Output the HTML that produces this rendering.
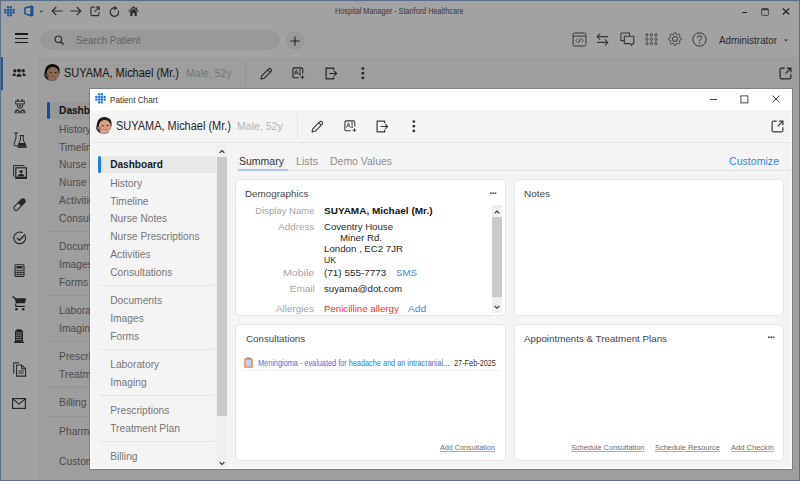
<!DOCTYPE html>
<html><head><meta charset="utf-8"><style>
html,body{margin:0;padding:0;width:800px;height:481px;overflow:hidden;background:#a2a2a2}
body{position:relative;font-family:"Liberation Sans", sans-serif}
.t{position:absolute;white-space:nowrap;font-family:"Liberation Sans", sans-serif}
svg{overflow:visible}
</style></head><body>
<div style="position:absolute;left:0px;top:0px;width:800px;height:481px;background:#f9f9f9"></div><svg style="position:absolute;left:4.2px;top:5.5px;" width="11" height="11" viewBox="0 0 11 11"><rect x="0.9" y="3.4" width="9.2" height="4.2" fill="#2a80e6" opacity="0.22"/><rect x="3.4" y="0.9" width="4.2" height="9.2" fill="#2a80e6" opacity="0.22"/><circle cx="4.05" cy="1.20" r="1.15" fill="#2a80e6"/><circle cx="6.90" cy="1.20" r="1.15" fill="#2a80e6"/><circle cx="1.20" cy="3.95" r="1.15" fill="#2a80e6"/><circle cx="4.05" cy="3.95" r="1.15" fill="#2a80e6"/><circle cx="6.90" cy="3.95" r="1.15" fill="#2a80e6"/><circle cx="9.75" cy="3.95" r="1.15" fill="#2a80e6"/><circle cx="1.20" cy="6.70" r="1.15" fill="#2a80e6"/><circle cx="4.05" cy="6.70" r="1.15" fill="#2a80e6"/><circle cx="6.90" cy="6.70" r="1.15" fill="#2a80e6"/><circle cx="9.75" cy="6.70" r="1.15" fill="#2a80e6"/><circle cx="4.05" cy="9.45" r="1.15" fill="#2a80e6"/><circle cx="6.90" cy="9.45" r="1.15" fill="#2a80e6"/></svg><svg style="position:absolute;left:23px;top:5px;" width="12" height="12" viewBox="0 0 12 12"><path d="M1.2 2.6 L8.2 0.6 L10.4 1.2 V10.8 L8.2 11.4 L1.2 9.2 Z" fill="#2a7ad6"/><path d="M2.7 3.4 L7.4 2.5 V9.5 L2.7 8.5 Z" fill="#f9f9f9"/></svg><svg style="position:absolute;left:38.5px;top:9.5px;" width="5" height="4" viewBox="0 0 5 4"><path d="M0.5 0.8 H4 L2.25 3Z" fill="#666"/></svg><svg style="position:absolute;left:50.5px;top:6px;" width="12" height="10" viewBox="0 0 12 10"><path d="M11.5 5 H1.2 M5.2 1 L1.2 5 L5.2 9" fill="none" stroke="#4a4a4a" stroke-width="1.2"/></svg><svg style="position:absolute;left:69.5px;top:6px;" width="12" height="10" viewBox="0 0 12 10"><path d="M0.5 5 H10.8 M6.8 1 L10.8 5 L6.8 9" fill="none" stroke="#4a4a4a" stroke-width="1.2"/></svg><svg style="position:absolute;left:89.5px;top:6px;" width="10" height="10" viewBox="0 0 10 10"><path d="M4.6 1.1 H2.2 Q0.9 1.1 0.9 2.4 V8.4 Q0.9 9.6 2.2 9.6 H7.6 Q8.9 9.6 8.9 8.4 V6" fill="none" stroke="#4a4a4a" stroke-width="1.1"/><path d="M4.6 5.6 L8.6 1.6 M5.8 1 H9.2 V4.4" fill="none" stroke="#4a4a4a" stroke-width="1.1"/></svg><svg style="position:absolute;left:108.5px;top:5.5px;" width="11" height="11" viewBox="0 0 11 11"><path d="M9.3 4.4 A4.2 4.2 0 1 1 5.8 1.9" fill="none" stroke="#4a4a4a" stroke-width="1.3"/><path d="M5 0 L8.6 2 L5.4 4.4Z" fill="#4a4a4a"/></svg><svg style="position:absolute;left:127.5px;top:5.5px;" width="11" height="11" viewBox="0 0 11 11"><path d="M0.6 5.4 L5.5 0.9 L10.4 5.4" fill="none" stroke="#4a4a4a" stroke-width="1.2"/><path d="M2.2 5.6 L5.5 2.6 L8.8 5.6 V10 H6.6 V7.2 H4.4 V10 H2.2Z" fill="#4a4a4a"/><rect x="7.8" y="1.6" width="1.3" height="2.6" fill="#4a4a4a"/></svg><div class="t" style="left:335.20px;transform-origin:left center;top:5.37px;font-size:8.5px;line-height:12px;color:#5c5c5c;font-weight:normal;;transform:scaleX(0.8576);">Hospital Manager - Stanford Healthcare</div><div style="position:absolute;left:741.5px;top:11.6px;width:5.5px;height:1.1px;background:#3a3a3a"></div><svg style="position:absolute;left:760.5px;top:7.5px;" width="8" height="8" viewBox="0 0 8 8"><rect x="0.6" y="0.6" width="6.8" height="6.8" rx="1" fill="none" stroke="#5a5a5a" stroke-width="0.9"/><rect x="0.6" y="0.6" width="6.8" height="1.6" fill="#5a5a5a"/></svg><svg style="position:absolute;left:781.5px;top:7.5px;" width="8" height="7" viewBox="0 0 8 7"><path d="M0.8 0.5 L7.2 6.5 M7.2 0.5 L0.8 6.5" stroke="#333" stroke-width="1.1"/></svg><div style="position:absolute;left:15px;top:33.2px;width:13px;height:1.6px;background:#262a30"></div><div style="position:absolute;left:15px;top:37.5px;width:13px;height:1.6px;background:#262a30"></div><div style="position:absolute;left:15px;top:41.8px;width:13px;height:1.6px;background:#262a30"></div><div style="position:absolute;left:40px;top:30px;width:240px;height:20px;background:#ececec;border-radius:10px"></div><svg style="position:absolute;left:54px;top:35px;" width="11" height="11" viewBox="0 0 11 11"><circle cx="4.3" cy="4.3" r="3.3" fill="none" stroke="#4a4a4a" stroke-width="1.2"/><path d="M6.8 6.8 L9.6 9.6" stroke="#4a4a4a" stroke-width="1.4"/></svg><div class="t" style="left:75.80px;transform-origin:left center;top:34.85px;font-size:10px;line-height:12px;color:#9a9a9a;font-weight:normal;;transform:scaleX(0.9816);">Search Patient</div><div style="position:absolute;left:285.5px;top:31px;width:19px;height:19px;background:#ececec;border-radius:50%"></div><svg style="position:absolute;left:289.5px;top:36px;" width="10" height="10" viewBox="0 0 10 10"><path d="M5 0.4 V9.6 M0.4 5 H9.6" stroke="#333" stroke-width="1.1"/></svg><svg style="position:absolute;left:571.5px;top:31.5px;" width="15" height="15" viewBox="0 0 15 15"><rect x="1" y="1" width="13" height="13" rx="1.6" fill="none" stroke="#555555" stroke-width="1"/><path d="M1 4.1 H14" stroke="#555555" stroke-width="1"/><path d="M5.4 6.9 L3.8 8.6 L5.4 10.3 M9.6 6.9 L11.2 8.6 L9.6 10.3 M8.2 6.2 L6.8 11" fill="none" stroke="#555555" stroke-width="0.9"/></svg><svg style="position:absolute;left:596px;top:32.5px;" width="13" height="13" viewBox="0 0 13 13"><path d="M1.2 3.6 H12 M4.2 0.6 L1.2 3.6 L4.2 6.6" fill="none" stroke="#555555" stroke-width="1.1"/><path d="M11.8 9.4 H1 M8.8 6.4 L11.8 9.4 L8.8 12.4" fill="none" stroke="#555555" stroke-width="1.1"/></svg><svg style="position:absolute;left:619.5px;top:32px;" width="15" height="15" viewBox="0 0 15 15"><path d="M0.9 0.9 H9.5 V4.2 M0.9 0.9 V8.6 H4.3" fill="none" stroke="#555555" stroke-width="1.05"/><path d="M4.3 4.3 H13.8 V11.6 H12.6 L11.6 13.6 L10.6 11.6 H4.3 Z" fill="none" stroke="#555555" stroke-width="1.05" stroke-linejoin="round"/></svg><svg style="position:absolute;left:644.5px;top:33px;" width="13" height="13" viewBox="0 0 13 13"><ellipse cx="1.90" cy="1.90" rx="1.05" ry="1.35" fill="none" stroke="#555555" stroke-width="0.85"/><ellipse cx="6.40" cy="1.90" rx="1.05" ry="1.35" fill="none" stroke="#555555" stroke-width="0.85"/><ellipse cx="10.90" cy="1.90" rx="1.05" ry="1.35" fill="none" stroke="#555555" stroke-width="0.85"/><ellipse cx="1.90" cy="6.20" rx="1.05" ry="1.35" fill="none" stroke="#555555" stroke-width="0.85"/><ellipse cx="6.40" cy="6.20" rx="1.05" ry="1.35" fill="none" stroke="#555555" stroke-width="0.85"/><ellipse cx="10.90" cy="6.20" rx="1.05" ry="1.35" fill="none" stroke="#555555" stroke-width="0.85"/><ellipse cx="1.90" cy="10.50" rx="1.05" ry="1.35" fill="none" stroke="#555555" stroke-width="0.85"/><ellipse cx="6.40" cy="10.50" rx="1.05" ry="1.35" fill="none" stroke="#555555" stroke-width="0.85"/><ellipse cx="10.90" cy="10.50" rx="1.05" ry="1.35" fill="none" stroke="#555555" stroke-width="0.85"/></svg><svg style="position:absolute;left:668px;top:32px;" width="14" height="14" viewBox="0 0 14 14"><circle cx="7" cy="7" r="2.5" fill="none" stroke="#555555" stroke-width="1"/><path d="M8.81 2.63 L8.93 2.67 L9.04 2.72 L9.17 2.75 L9.30 2.76 L9.47 2.71 L9.71 2.58 L10.02 2.35 L10.35 2.13 L10.62 2.02 L10.83 2.01 L10.99 2.07 L11.14 2.16 L11.27 2.26 L11.40 2.37 L11.52 2.48 L11.63 2.60 L11.74 2.73 L11.84 2.86 L11.93 3.01 L11.99 3.17 L11.98 3.38 L11.87 3.65 L11.65 3.98 L11.42 4.29 L11.29 4.53 L11.24 4.70 L11.25 4.83 L11.28 4.96 L11.33 5.07 L11.37 5.19 L11.42 5.30 L11.47 5.42 L11.54 5.53 L11.63 5.63 L11.78 5.72 L12.04 5.79 L12.42 5.85 L12.81 5.92 L13.08 6.04 L13.23 6.18 L13.31 6.34 L13.35 6.50 L13.37 6.67 L13.38 6.83 L13.39 7.00 L13.38 7.17 L13.37 7.33 L13.35 7.50 L13.31 7.66 L13.23 7.82 L13.08 7.96 L12.81 8.08 L12.42 8.15 L12.04 8.21 L11.78 8.28 L11.63 8.37 L11.54 8.47 L11.47 8.58 L11.42 8.70 L11.37 8.81 L11.33 8.93 L11.28 9.04 L11.25 9.17 L11.24 9.30 L11.29 9.47 L11.42 9.71 L11.65 10.02 L11.87 10.35 L11.98 10.62 L11.99 10.83 L11.93 10.99 L11.84 11.14 L11.74 11.27 L11.63 11.40 L11.52 11.52 L11.40 11.63 L11.27 11.74 L11.14 11.84 L10.99 11.93 L10.83 11.99 L10.62 11.98 L10.35 11.87 L10.02 11.65 L9.71 11.42 L9.47 11.29 L9.30 11.24 L9.17 11.25 L9.04 11.28 L8.93 11.33 L8.81 11.37 L8.70 11.42 L8.58 11.47 L8.47 11.54 L8.37 11.63 L8.28 11.78 L8.21 12.04 L8.15 12.42 L8.08 12.81 L7.96 13.08 L7.82 13.23 L7.66 13.31 L7.50 13.35 L7.33 13.37 L7.17 13.38 L7.00 13.39 L6.83 13.38 L6.67 13.37 L6.50 13.35 L6.34 13.31 L6.18 13.23 L6.04 13.08 L5.92 12.81 L5.85 12.42 L5.79 12.04 L5.72 11.78 L5.63 11.63 L5.53 11.54 L5.42 11.47 L5.30 11.42 L5.19 11.37 L5.07 11.33 L4.96 11.28 L4.83 11.25 L4.70 11.24 L4.53 11.29 L4.29 11.42 L3.98 11.65 L3.65 11.87 L3.38 11.98 L3.17 11.99 L3.01 11.93 L2.86 11.84 L2.73 11.74 L2.60 11.63 L2.48 11.52 L2.37 11.40 L2.26 11.27 L2.16 11.14 L2.07 10.99 L2.01 10.83 L2.02 10.62 L2.13 10.35 L2.35 10.02 L2.58 9.71 L2.71 9.47 L2.76 9.30 L2.75 9.17 L2.72 9.04 L2.67 8.93 L2.63 8.81 L2.58 8.70 L2.53 8.58 L2.46 8.47 L2.37 8.37 L2.22 8.28 L1.96 8.21 L1.58 8.15 L1.19 8.08 L0.92 7.96 L0.77 7.82 L0.69 7.66 L0.65 7.50 L0.63 7.33 L0.62 7.17 L0.61 7.00 L0.62 6.83 L0.63 6.67 L0.65 6.50 L0.69 6.34 L0.77 6.18 L0.92 6.04 L1.19 5.92 L1.58 5.85 L1.96 5.79 L2.22 5.72 L2.37 5.63 L2.46 5.53 L2.53 5.42 L2.58 5.30 L2.63 5.19 L2.67 5.07 L2.72 4.96 L2.75 4.83 L2.76 4.70 L2.71 4.53 L2.58 4.29 L2.35 3.98 L2.13 3.65 L2.02 3.38 L2.01 3.17 L2.07 3.01 L2.16 2.86 L2.26 2.73 L2.37 2.60 L2.48 2.48 L2.60 2.37 L2.73 2.26 L2.86 2.16 L3.01 2.07 L3.17 2.01 L3.38 2.02 L3.65 2.13 L3.98 2.35 L4.29 2.58 L4.53 2.71 L4.70 2.76 L4.83 2.75 L4.96 2.72 L5.07 2.67 L5.19 2.63 L5.30 2.58 L5.42 2.53 L5.53 2.46 L5.63 2.37 L5.72 2.22 L5.79 1.96 L5.85 1.58 L5.92 1.19 L6.04 0.92 L6.18 0.77 L6.34 0.69 L6.50 0.65 L6.67 0.63 L6.83 0.62 L7.00 0.61 L7.17 0.62 L7.33 0.63 L7.50 0.65 L7.66 0.69 L7.82 0.77 L7.96 0.92 L8.08 1.19 L8.15 1.58 L8.21 1.96 L8.28 2.22 L8.37 2.37 L8.47 2.46 L8.58 2.53 L8.70 2.58 L8.81 2.63Z" fill="none" stroke="#555555" stroke-width="0.95" stroke-linejoin="round"/></svg><svg style="position:absolute;left:691.5px;top:31.5px;" width="15" height="15" viewBox="0 0 15 15"><circle cx="7.5" cy="7.5" r="6.7" fill="none" stroke="#555555" stroke-width="1"/><path d="M5.5 5.8 Q5.5 3.7 7.5 3.7 Q9.6 3.7 9.6 5.6 Q9.6 6.9 8.2 7.6 Q7.5 8 7.5 9.2" fill="none" stroke="#555555" stroke-width="1"/><circle cx="7.5" cy="11" r="0.7" fill="#555555"/></svg><div class="t" style="left:719.40px;transform-origin:left center;top:34.95px;font-size:10.3px;line-height:12px;color:#444;font-weight:normal;;transform:scaleX(0.9584);">Administrator</div><svg style="position:absolute;left:783.5px;top:38.5px;" width="4" height="3" viewBox="0 0 4 3"><path d="M0.2 0.5 H3.6 L1.9 2.6Z" fill="#444"/></svg><div style="position:absolute;left:38px;top:55.5px;width:762px;height:1px;background:#fbfbfb"></div><div style="position:absolute;left:0px;top:56px;width:37.5px;height:425px;background:#f8f8f8"></div><div style="position:absolute;left:37.5px;top:56px;width:1px;height:425px;background:#f1f1f1"></div><div style="position:absolute;left:0px;top:57px;width:3.2px;height:32.5px;background:#3a8be6"></div><div style="position:absolute;left:38.5px;top:56.5px;width:762px;height:424px;background:#f3f3f3"></div><svg style="position:absolute;left:43.0px;top:63.2px;" width="18" height="18" viewBox="0 0 18 18"><defs><clipPath id="av1"><circle cx="9" cy="9" r="8.8"/></clipPath></defs>
<g clip-path="url(#av1)"><rect width="18" height="18" fill="#eef2f7"/>
<path d="M1.2 12 Q2 0.5 9.6 1 Q17 1.5 16.6 9.5 L15 14 Z" fill="#1d1816"/>
<ellipse cx="9.8" cy="10.6" rx="6.1" ry="6.9" fill="#d3a085"/>
<path d="M3.6 7.6 Q5.6 3.4 10.4 3.8 Q14.6 4.2 16 8 L16.2 5 Q14.6 1.8 10 1.8 Q4.4 1.9 3.4 6 Z" fill="#1d1816"/>
<path d="M6.6 9.8 H8.8 M11.4 9.6 H13.6" stroke="#3a2218" stroke-width="0.9"/>
<path d="M8 13.4 Q10.3 14.6 12.6 13.2" stroke="#b87a64" stroke-width="0.8" fill="none"/>
<path d="M0 18 V16.5 Q4 15.5 9 17.6 Q13 16.2 18 15.6 V18Z" fill="#3d4a5e"/>
<ellipse cx="3.6" cy="13.4" rx="2.2" ry="2.7" fill="#9c6c56"/>
<path d="M1.8 11.8 L5.8 16.4 L4.6 17.4 L0.8 13Z" fill="#20242c"/>
</g></svg><div class="t" style="left:64.20px;transform-origin:left center;top:67.46px;font-size:12.3px;line-height:12px;color:#262626;font-weight:normal;;transform:scaleX(0.8915);">SUYAMA, Michael (Mr.)</div><div class="t" style="left:185.60px;transform-origin:left center;top:67.40px;font-size:11.6px;line-height:12px;color:#b6b6b6;font-weight:normal;;transform:scaleX(0.9104);">Male, 52y</div><div style="position:absolute;left:245.3px;top:60.5px;width:1px;height:25px;background:#e4e4e4"></div><svg style="position:absolute;left:259.5px;top:66.6px;" width="13" height="13" viewBox="0 0 13 13"><path d="M1 12 L1.7 8.9 L8.9 1.7 Q9.7 1 10.5 1.7 L11.3 2.5 Q12 3.3 11.3 4.1 L4.1 11.3 Z M7.8 2.8 L10.2 5.2" fill="none" stroke="#3a3a3a" stroke-width="1.1" stroke-linejoin="round"/></svg><svg style="position:absolute;left:291.9px;top:67.4px;" width="13" height="13" viewBox="0 0 13 13"><path d="M10.8 6.6 V2.2 Q10.8 0.9 9.5 0.9 H2.2 Q0.9 0.9 0.9 2.2 V9.5 Q0.9 10.8 2.2 10.8 H6.6" fill="none" stroke="#3a3a3a" stroke-width="1.1"/><path d="M2.5 7.6 L4.4 2.8 L6.3 7.6 M3.2 6 H5.6 M7.2 2.8 H9 M8.1 2.8 V7.6 M7.2 7.6 H9" fill="none" stroke="#3a3a3a" stroke-width="0.85"/><path d="M10.4 7.8 L11 9.6 L12.8 10.2 L11 10.8 L10.4 12.6 L9.8 10.8 L8 10.2 L9.8 9.6Z" fill="#3a3a3a"/></svg><svg style="position:absolute;left:324.5px;top:67.0px;" width="13" height="13" viewBox="0 0 13 13"><path d="M8.6 3.3 V1.1 H1.1 V11.9 H8.6 V9.7" fill="none" stroke="#3a3a3a" stroke-width="1.2"/><path d="M4.4 6.5 H11.6 M9.2 4.1 L11.6 6.5 L9.2 8.9" fill="none" stroke="#3a3a3a" stroke-width="1.2"/></svg><svg style="position:absolute;left:360.5px;top:67.3px;" width="4" height="13" viewBox="0 0 4 13"><circle cx="1.85" cy="1.55" r="1.4" fill="#3a3a3a"/><circle cx="1.85" cy="6.15" r="1.4" fill="#3a3a3a"/><circle cx="1.85" cy="10.9" r="1.4" fill="#3a3a3a"/></svg><svg style="position:absolute;left:778.5px;top:67px;" width="13" height="13" viewBox="0 0 13 13"><path d="M5.6 1.1 H2.6 Q1.1 1.1 1.1 2.6 V10.4 Q1.1 11.9 2.6 11.9 H10.4 Q11.9 11.9 11.9 10.4 V7.2" fill="none" stroke="#3a3a3a" stroke-width="1.2"/><path d="M6.6 6.4 L11.2 1.8 M7.8 1.1 H11.9 V5.2" fill="none" stroke="#3a3a3a" stroke-width="1.2"/></svg><div style="position:absolute;left:49.9px;top:101.5px;width:48.5px;height:17.5px;background:#e9e9e9"></div><div style="position:absolute;left:46.9px;top:101.5px;width:3px;height:17.5px;background:#2179e6;border-radius:1.5px"></div><div class="t" style="left:59.10px;transform-origin:left center;top:105.02px;font-size:10.1px;line-height:12px;color:#1d1d1d;font-weight:bold;;">Dashboard</div><div class="t" style="left:59.10px;transform-origin:left center;top:123.76px;font-size:10.25px;line-height:12px;color:#767676;font-weight:normal;;">History</div><div class="t" style="left:59.10px;transform-origin:left center;top:141.66px;font-size:10.25px;line-height:12px;color:#767676;font-weight:normal;;">Timeline</div><div class="t" style="left:59.10px;transform-origin:left center;top:159.46px;font-size:10.25px;line-height:12px;color:#767676;font-weight:normal;;">Nurse Notes</div><div class="t" style="left:59.10px;transform-origin:left center;top:177.26px;font-size:10.25px;line-height:12px;color:#767676;font-weight:normal;;">Nurse Prescriptions</div><div class="t" style="left:59.10px;transform-origin:left center;top:195.06px;font-size:10.25px;line-height:12px;color:#767676;font-weight:normal;;">Activities</div><div class="t" style="left:59.10px;transform-origin:left center;top:212.76px;font-size:10.25px;line-height:12px;color:#767676;font-weight:normal;;">Consultations</div><div style="position:absolute;left:47.9px;top:231px;width:50px;height:1px;background:#e6e6e6"></div><div class="t" style="left:59.10px;transform-origin:left center;top:241.16px;font-size:10.25px;line-height:12px;color:#767676;font-weight:normal;;">Documents</div><div class="t" style="left:59.10px;transform-origin:left center;top:259.16px;font-size:10.25px;line-height:12px;color:#767676;font-weight:normal;;">Images</div><div class="t" style="left:59.10px;transform-origin:left center;top:276.96px;font-size:10.25px;line-height:12px;color:#767676;font-weight:normal;;">Forms</div><div style="position:absolute;left:47.9px;top:295px;width:50px;height:1px;background:#e6e6e6"></div><div class="t" style="left:59.10px;transform-origin:left center;top:305.26px;font-size:10.25px;line-height:12px;color:#767676;font-weight:normal;;">Laboratory</div><div class="t" style="left:59.10px;transform-origin:left center;top:323.06px;font-size:10.25px;line-height:12px;color:#767676;font-weight:normal;;">Imaging</div><div style="position:absolute;left:47.9px;top:341px;width:50px;height:1px;background:#e6e6e6"></div><div class="t" style="left:59.10px;transform-origin:left center;top:351.16px;font-size:10.25px;line-height:12px;color:#767676;font-weight:normal;;">Prescriptions</div><div class="t" style="left:59.10px;transform-origin:left center;top:368.76px;font-size:10.25px;line-height:12px;color:#767676;font-weight:normal;;">Treatment Plan</div><div style="position:absolute;left:47.9px;top:387px;width:50px;height:1px;background:#e6e6e6"></div><div class="t" style="left:59.10px;transform-origin:left center;top:396.86px;font-size:10.25px;line-height:12px;color:#767676;font-weight:normal;;">Billing</div><div style="position:absolute;left:47.9px;top:416px;width:50px;height:1px;background:#e6e6e6"></div><div class="t" style="left:59.10px;transform-origin:left center;top:425.66px;font-size:10.25px;line-height:12px;color:#767676;font-weight:normal;;">Pharmacy</div><div class="t" style="left:59.10px;transform-origin:left center;top:456.46px;font-size:10.25px;line-height:12px;color:#767676;font-weight:normal;;">Customer Orders</div><svg style="position:absolute;left:12px;top:68px;" width="15" height="10" viewBox="0 0 15 10"><circle cx="2.9" cy="2.7" r="1.7" fill="#3a3a3a"/><circle cx="7" cy="2.6" r="1.95" fill="#3a3a3a"/><circle cx="11.2" cy="2.7" r="1.7" fill="#3a3a3a"/><path d="M4.5 8.8 Q4.5 5.8 7 5.8 Q9.5 5.8 9.5 8.8Z" fill="#3a3a3a"/><path d="M0.3 8.1 Q0.5 5.6 2.9 5.3 L3.9 5.9 Q3.3 6.8 3.6 8.1Z" fill="#3a3a3a"/><path d="M13.9 8.1 Q13.7 5.6 11.3 5.3 L10.3 5.9 Q10.9 6.8 10.6 8.1Z" fill="#3a3a3a"/></svg><svg style="position:absolute;left:13.5px;top:98.5px;" width="12" height="15" viewBox="0 0 12 15"><rect x="2.6" y="0.2" width="2.3" height="2" rx="0.6" fill="#5a5a5a"/><rect x="7.1" y="0.2" width="2.3" height="2" rx="0.6" fill="#5a5a5a"/><rect x="1.6" y="2.3" width="8.8" height="2.6" fill="none" stroke="#5a5a5a" stroke-width="1.1"/><path d="M3.3 5.2 Q3.2 9.2 6 9.2 Q8.8 9.2 8.7 5.2" fill="none" stroke="#5a5a5a" stroke-width="1.2"/><circle cx="6" cy="6.6" r="1.2" fill="#5a5a5a"/><path d="M0.5 14.3 Q0.5 10.3 3.6 9.9 L6 12.2 L8.4 9.9 Q11.5 10.3 11.5 14.3Z" fill="#5a5a5a"/><path d="M2.2 13.5 L3.5 11.6 L4.8 13.5Z M7.2 13.5 L8.5 11.6 L9.8 13.5Z" fill="#f3f3f3"/></svg><svg style="position:absolute;left:12.5px;top:131.5px;" width="14" height="16" viewBox="0 0 14 16"><path d="M1.3 1 H5 M3 1 V6 L0.9 12.5 Q0.6 13.6 1.6 13.6 H4" fill="none" stroke="#3a3a3a" stroke-width="1"/><path d="M6.4 3.6 H11.2 M7.4 3.6 V8 L4.6 14.4 Q4.2 15.4 5.3 15.4 H12.7 Q13.8 15.4 13.4 14.4 L10.2 8 V3.6" fill="none" stroke="#3a3a3a" stroke-width="1"/><path d="M6.2 11 H11.8 L13.3 14.8 H4.7Z" fill="#3a3a3a"/></svg><svg style="position:absolute;left:12.5px;top:165px;" width="14" height="14" viewBox="0 0 14 14"><path d="M0.6 11.4 V0.6 H11.4" fill="none" stroke="#3a3a3a" stroke-width="1"/><rect x="2.8" y="2.8" width="10.6" height="10.6" fill="none" stroke="#3a3a3a" stroke-width="1.2"/><circle cx="8.1" cy="6.6" r="1.6" fill="#3a3a3a"/><path d="M5.1 11.2 Q5.1 8.8 8.1 8.8 Q11.1 8.8 11.1 11.2Z" fill="#3a3a3a"/><rect x="2.8" y="11.6" width="10.6" height="1.8" fill="#3a3a3a"/></svg><svg style="position:absolute;left:12.6px;top:198.4px;" width="13" height="13" viewBox="0 0 13 13"><path d="M8.4 1.5 Q10 0 11.6 1.5 Q13.1 3.1 11.6 4.7 L4.7 11.6 Q3.1 13.1 1.5 11.6 Q0 10 1.5 8.4Z" fill="none" stroke="#3a3a3a" stroke-width="1.05"/><path d="M8.4 1.5 Q10 0 11.6 1.5 Q13.1 3.1 11.6 4.7 L8.1 8.1 L4.9 4.9Z" fill="#3a3a3a"/></svg><svg style="position:absolute;left:12.5px;top:231px;" width="14" height="14" viewBox="0 0 14 14"><path d="M12.3 5.2 A5.9 5.9 0 1 1 9.6 1.8" fill="none" stroke="#3a3a3a" stroke-width="1.15"/><path d="M3.9 6.9 L6.3 9.3 L12.4 3.2" fill="none" stroke="#3a3a3a" stroke-width="1.25"/></svg><svg style="position:absolute;left:13.5px;top:264px;" width="11" height="13" viewBox="0 0 11 13"><rect x="1" y="0.7" width="9" height="11.8" rx="0.8" fill="none" stroke="#3a3a3a" stroke-width="1.05"/><rect x="2.4" y="2.1" width="6.2" height="2.4" fill="#3a3a3a"/><path d="M1 6.3 H10 M1 8.5 H10 M1 10.5 H10 M4 6.3 V12.5 M7 6.3 V12.5" stroke="#3a3a3a" stroke-width="0.8"/></svg><svg style="position:absolute;left:11px;top:296px;" width="17" height="15" viewBox="0 0 17 15"><path d="M1.3 1.2 H3.2 L4.6 3.6" fill="none" stroke="#3a3a3a" stroke-width="1.2"/><path d="M3.7 2.2 H15.1 L14 7.3 H4.9Z" fill="#3a3a3a"/><path d="M5.2 7.2 Q4.2 8.6 4.8 10.4 H13.9" fill="none" stroke="#3a3a3a" stroke-width="1.1"/><circle cx="5.4" cy="13.2" r="1.25" fill="#3a3a3a"/><circle cx="12.2" cy="13.2" r="1.25" fill="#3a3a3a"/></svg><svg style="position:absolute;left:14px;top:329px;" width="10" height="14" viewBox="0 0 10 14"><rect x="1" y="1.5" width="8" height="11.5" fill="#3a3a3a"/><rect x="2.3" y="0.3" width="5.4" height="2" fill="#3a3a3a"/><rect x="2.3" y="3.4" width="1.2" height="1.2" fill="#f3f3f3"/><rect x="4.3" y="3.4" width="1.2" height="1.2" fill="#f3f3f3"/><rect x="6.3" y="3.4" width="1.2" height="1.2" fill="#f3f3f3"/><rect x="2.3" y="5.6" width="1.2" height="1.2" fill="#f3f3f3"/><rect x="4.3" y="5.6" width="1.2" height="1.2" fill="#f3f3f3"/><rect x="6.3" y="5.6" width="1.2" height="1.2" fill="#f3f3f3"/><rect x="2.3" y="7.8" width="1.2" height="1.2" fill="#f3f3f3"/><rect x="4.3" y="7.8" width="1.2" height="1.2" fill="#f3f3f3"/><rect x="6.3" y="7.8" width="1.2" height="1.2" fill="#f3f3f3"/><rect x="2.3" y="10.0" width="1.2" height="1.2" fill="#f3f3f3"/><rect x="4.3" y="10.0" width="1.2" height="1.2" fill="#f3f3f3"/><rect x="6.3" y="10.0" width="1.2" height="1.2" fill="#f3f3f3"/><rect x="0" y="12.8" width="10" height="1.2" fill="#3a3a3a"/></svg><svg style="position:absolute;left:12.5px;top:362.3px;" width="14" height="15" viewBox="0 0 14 15"><path d="M0.8 11.4 V0.8 H6.4" fill="none" stroke="#3a3a3a" stroke-width="1.05"/><path d="M3.6 3 H8.6 L12.6 6.9 V14.1 H3.6Z" fill="none" stroke="#3a3a3a" stroke-width="1.05"/><path d="M8.6 3 V6.9 H12.6" fill="none" stroke="#3a3a3a" stroke-width="1"/><path d="M5.3 9 H10.8 M5.3 11.1 H10.8" stroke="#3a3a3a" stroke-width="0.9"/></svg><svg style="position:absolute;left:12px;top:397.5px;" width="14" height="11" viewBox="0 0 14 11"><rect x="0.6" y="0.6" width="12.8" height="9.8" fill="none" stroke="#3a3a3a" stroke-width="1.15"/><path d="M0.8 0.9 L7 6.1 L13.2 0.9" fill="none" stroke="#3a3a3a" stroke-width="1.15"/></svg><div style="position:absolute;left:0px;top:0px;width:800px;height:1px;background:#90acd4"></div><div style="position:absolute;left:0px;top:0px;width:1px;height:481px;background:#90acd4"></div><div style="position:absolute;left:799px;top:0px;width:1px;height:481px;background:#90acd4"></div><div style="position:absolute;left:0px;top:480px;width:800px;height:1px;background:#90acd4"></div><div style="position:absolute;left:0px;top:0px;width:800px;height:481px;background:rgba(0,0,0,0.35)"></div><div style="position:absolute;left:89px;top:88px;width:704px;height:382px;background:rgba(0,0,0,0.18)"></div><div style="position:absolute;left:90px;top:89px;width:702px;height:380px;background:#f4f4f4"></div><div style="position:absolute;left:90px;top:89px;width:702px;height:21px;background:#fff"></div><div style="position:absolute;left:90px;top:110px;width:1px;height:359px;background:#fafafa"></div><div style="position:absolute;left:791px;top:110px;width:1px;height:359px;background:#fafafa"></div><div style="position:absolute;left:90px;top:468px;width:702px;height:1px;background:#fafafa"></div><svg style="position:absolute;left:95.3px;top:93.3px;" width="11" height="11" viewBox="0 0 11 11"><rect x="0.9" y="3.4" width="9.2" height="4.2" fill="#1a6fe0" opacity="0.22"/><rect x="3.4" y="0.9" width="4.2" height="9.2" fill="#1a6fe0" opacity="0.22"/><circle cx="4.05" cy="1.20" r="1.15" fill="#1a6fe0"/><circle cx="6.90" cy="1.20" r="1.15" fill="#1a6fe0"/><circle cx="1.20" cy="3.95" r="1.15" fill="#1a6fe0"/><circle cx="4.05" cy="3.95" r="1.15" fill="#1a6fe0"/><circle cx="6.90" cy="3.95" r="1.15" fill="#1a6fe0"/><circle cx="9.75" cy="3.95" r="1.15" fill="#1a6fe0"/><circle cx="1.20" cy="6.70" r="1.15" fill="#1a6fe0"/><circle cx="4.05" cy="6.70" r="1.15" fill="#1a6fe0"/><circle cx="6.90" cy="6.70" r="1.15" fill="#1a6fe0"/><circle cx="9.75" cy="6.70" r="1.15" fill="#1a6fe0"/><circle cx="4.05" cy="9.45" r="1.15" fill="#1a6fe0"/><circle cx="6.90" cy="9.45" r="1.15" fill="#1a6fe0"/></svg><div class="t" style="left:110.20px;transform-origin:left center;top:93.66px;font-size:8.8px;line-height:12px;color:#333;font-weight:normal;;transform:scaleX(0.9286);">Patient Chart</div><div style="position:absolute;left:710px;top:99px;width:7px;height:1px;background:#444"></div><svg style="position:absolute;left:739.8px;top:95px;" width="9" height="9" viewBox="0 0 9 9"><rect x="0.9" y="0.9" width="7" height="7" fill="none" stroke="#444" stroke-width="0.95"/></svg><svg style="position:absolute;left:772px;top:95px;" width="8" height="8" viewBox="0 0 8 8"><path d="M0.6 0.6 L7.4 7.4 M7.4 0.6 L0.6 7.4" stroke="#333" stroke-width="0.95"/></svg><div style="position:absolute;left:91px;top:142px;width:700px;height:1px;background:#e6e6e6"></div><svg style="position:absolute;left:94.7px;top:116.2px;" width="18" height="18" viewBox="0 0 18 18"><defs><clipPath id="av2"><circle cx="9" cy="9" r="8.8"/></clipPath></defs>
<g clip-path="url(#av2)"><rect width="18" height="18" fill="#eef2f7"/>
<path d="M1.2 12 Q2 0.5 9.6 1 Q17 1.5 16.6 9.5 L15 14 Z" fill="#1d1816"/>
<ellipse cx="9.8" cy="10.6" rx="6.1" ry="6.9" fill="#d3a085"/>
<path d="M3.6 7.6 Q5.6 3.4 10.4 3.8 Q14.6 4.2 16 8 L16.2 5 Q14.6 1.8 10 1.8 Q4.4 1.9 3.4 6 Z" fill="#1d1816"/>
<path d="M6.6 9.8 H8.8 M11.4 9.6 H13.6" stroke="#3a2218" stroke-width="0.9"/>
<path d="M8 13.4 Q10.3 14.6 12.6 13.2" stroke="#b87a64" stroke-width="0.8" fill="none"/>
<path d="M0 18 V16.5 Q4 15.5 9 17.6 Q13 16.2 18 15.6 V18Z" fill="#3d4a5e"/>
<ellipse cx="3.6" cy="13.4" rx="2.2" ry="2.7" fill="#9c6c56"/>
<path d="M1.8 11.8 L5.8 16.4 L4.6 17.4 L0.8 13Z" fill="#20242c"/>
</g></svg><div class="t" style="left:115.90px;transform-origin:left center;top:120.46px;font-size:12.3px;line-height:12px;color:#262626;font-weight:normal;;transform:scaleX(0.8915);">SUYAMA, Michael (Mr.)</div><div class="t" style="left:237.30px;transform-origin:left center;top:120.40px;font-size:11.6px;line-height:12px;color:#b6b6b6;font-weight:normal;;transform:scaleX(0.9104);">Male, 52y</div><div style="position:absolute;left:297px;top:113.5px;width:1px;height:25px;background:#e4e4e4"></div><svg style="position:absolute;left:311.2px;top:119.6px;" width="13" height="13" viewBox="0 0 13 13"><path d="M1 12 L1.7 8.9 L8.9 1.7 Q9.7 1 10.5 1.7 L11.3 2.5 Q12 3.3 11.3 4.1 L4.1 11.3 Z M7.8 2.8 L10.2 5.2" fill="none" stroke="#3a3a3a" stroke-width="1.1" stroke-linejoin="round"/></svg><svg style="position:absolute;left:343.6px;top:120.4px;" width="13" height="13" viewBox="0 0 13 13"><path d="M10.8 6.6 V2.2 Q10.8 0.9 9.5 0.9 H2.2 Q0.9 0.9 0.9 2.2 V9.5 Q0.9 10.8 2.2 10.8 H6.6" fill="none" stroke="#3a3a3a" stroke-width="1.1"/><path d="M2.5 7.6 L4.4 2.8 L6.3 7.6 M3.2 6 H5.6 M7.2 2.8 H9 M8.1 2.8 V7.6 M7.2 7.6 H9" fill="none" stroke="#3a3a3a" stroke-width="0.85"/><path d="M10.4 7.8 L11 9.6 L12.8 10.2 L11 10.8 L10.4 12.6 L9.8 10.8 L8 10.2 L9.8 9.6Z" fill="#3a3a3a"/></svg><svg style="position:absolute;left:376.2px;top:120.0px;" width="13" height="13" viewBox="0 0 13 13"><path d="M8.6 3.3 V1.1 H1.1 V11.9 H8.6 V9.7" fill="none" stroke="#3a3a3a" stroke-width="1.2"/><path d="M4.4 6.5 H11.6 M9.2 4.1 L11.6 6.5 L9.2 8.9" fill="none" stroke="#3a3a3a" stroke-width="1.2"/></svg><svg style="position:absolute;left:412.2px;top:120.3px;" width="4" height="13" viewBox="0 0 4 13"><circle cx="1.85" cy="1.55" r="1.4" fill="#3a3a3a"/><circle cx="1.85" cy="6.15" r="1.4" fill="#3a3a3a"/><circle cx="1.85" cy="10.9" r="1.4" fill="#3a3a3a"/></svg><svg style="position:absolute;left:770.6px;top:120px;" width="13" height="13" viewBox="0 0 13 13"><path d="M5.6 1.1 H2.6 Q1.1 1.1 1.1 2.6 V10.4 Q1.1 11.9 2.6 11.9 H10.4 Q11.9 11.9 11.9 10.4 V7.2" fill="none" stroke="#3a3a3a" stroke-width="1.2"/><path d="M6.6 6.4 L11.2 1.8 M7.8 1.1 H11.9 V5.2" fill="none" stroke="#3a3a3a" stroke-width="1.2"/></svg><div style="position:absolute;left:0;top:0;width:800px;height:468px;overflow:hidden"><div style="position:absolute;left:101px;top:155.5px;width:114.5px;height:17.5px;background:#e9e9e9"></div><div style="position:absolute;left:98px;top:155.5px;width:3px;height:17.5px;background:#2179e6;border-radius:1.5px"></div><div class="t" style="left:110.20px;transform-origin:left center;top:159.02px;font-size:10.1px;line-height:12px;color:#1d1d1d;font-weight:bold;;">Dashboard</div><div class="t" style="left:110.20px;transform-origin:left center;top:177.76px;font-size:10.25px;line-height:12px;color:#767676;font-weight:normal;;">History</div><div class="t" style="left:110.20px;transform-origin:left center;top:195.66px;font-size:10.25px;line-height:12px;color:#767676;font-weight:normal;;">Timeline</div><div class="t" style="left:110.20px;transform-origin:left center;top:213.46px;font-size:10.25px;line-height:12px;color:#767676;font-weight:normal;;">Nurse Notes</div><div class="t" style="left:110.20px;transform-origin:left center;top:231.26px;font-size:10.25px;line-height:12px;color:#767676;font-weight:normal;;">Nurse Prescriptions</div><div class="t" style="left:110.20px;transform-origin:left center;top:249.06px;font-size:10.25px;line-height:12px;color:#767676;font-weight:normal;;">Activities</div><div class="t" style="left:110.20px;transform-origin:left center;top:266.76px;font-size:10.25px;line-height:12px;color:#767676;font-weight:normal;;">Consultations</div><div style="position:absolute;left:99px;top:285px;width:116px;height:1px;background:#e6e6e6"></div><div class="t" style="left:110.20px;transform-origin:left center;top:295.16px;font-size:10.25px;line-height:12px;color:#767676;font-weight:normal;;">Documents</div><div class="t" style="left:110.20px;transform-origin:left center;top:313.16px;font-size:10.25px;line-height:12px;color:#767676;font-weight:normal;;">Images</div><div class="t" style="left:110.20px;transform-origin:left center;top:330.96px;font-size:10.25px;line-height:12px;color:#767676;font-weight:normal;;">Forms</div><div style="position:absolute;left:99px;top:349px;width:116px;height:1px;background:#e6e6e6"></div><div class="t" style="left:110.20px;transform-origin:left center;top:359.26px;font-size:10.25px;line-height:12px;color:#767676;font-weight:normal;;">Laboratory</div><div class="t" style="left:110.20px;transform-origin:left center;top:377.06px;font-size:10.25px;line-height:12px;color:#767676;font-weight:normal;;">Imaging</div><div style="position:absolute;left:99px;top:395px;width:116px;height:1px;background:#e6e6e6"></div><div class="t" style="left:110.20px;transform-origin:left center;top:405.16px;font-size:10.25px;line-height:12px;color:#767676;font-weight:normal;;">Prescriptions</div><div class="t" style="left:110.20px;transform-origin:left center;top:422.76px;font-size:10.25px;line-height:12px;color:#767676;font-weight:normal;;">Treatment Plan</div><div style="position:absolute;left:99px;top:441px;width:116px;height:1px;background:#e6e6e6"></div><div class="t" style="left:110.20px;transform-origin:left center;top:450.86px;font-size:10.25px;line-height:12px;color:#767676;font-weight:normal;;">Billing</div><div style="position:absolute;left:99px;top:470px;width:116px;height:1px;background:#e6e6e6"></div></div><div style="position:absolute;left:215.8px;top:145px;width:11.4px;height:323px;background:#efefef"></div><div style="position:absolute;left:216.5px;top:157px;width:10.3px;height:259px;background:#cacaca"></div><svg style="position:absolute;left:216.5px;top:148px;" width="10" height="7" viewBox="0 0 10 7"><path d="M2.6 4.9 L5 2.5 L7.4 4.9" fill="none" stroke="#333" stroke-width="1.15"/></svg><svg style="position:absolute;left:216.5px;top:460px;" width="10" height="7" viewBox="0 0 10 7"><path d="M2.6 2.1 L5 4.5 L7.4 2.1" fill="none" stroke="#333" stroke-width="1.15"/></svg><div class="t" style="left:238.90px;transform-origin:left center;top:155.37px;font-size:10.8px;line-height:12px;color:#333;font-weight:normal;;transform:scaleX(0.9735);">Summary</div><div class="t" style="left:296.20px;transform-origin:left center;top:155.27px;font-size:10.8px;line-height:12px;color:#8e8e8e;font-weight:normal;;transform:scaleX(0.9945);">Lists</div><div class="t" style="left:330.40px;transform-origin:left center;top:155.27px;font-size:10.8px;line-height:12px;color:#8e8e8e;font-weight:normal;;transform:scaleX(0.9698);">Demo Values</div><div class="t" style="left:729.00px;transform-origin:left center;top:155.37px;font-size:10.8px;line-height:12px;color:#3b84d9;font-weight:normal;;transform:scaleX(0.9817);">Customize</div><div style="position:absolute;left:237px;top:170px;width:555px;height:1px;background:#e4e4e4"></div><div style="position:absolute;left:237.5px;top:169.2px;width:50.3px;height:1.7px;background:#b3c6ec"></div><div style="position:absolute;left:235px;top:179px;width:271px;height:137px;background:#fff;border:1px solid #e6e6e6;border-radius:5px;box-sizing:border-box"></div><div style="position:absolute;left:514px;top:179px;width:270px;height:137px;background:#fff;border:1px solid #e6e6e6;border-radius:5px;box-sizing:border-box"></div><div style="position:absolute;left:235px;top:324px;width:271px;height:137px;background:#fff;border:1px solid #e6e6e6;border-radius:5px;box-sizing:border-box"></div><div style="position:absolute;left:514px;top:324px;width:270px;height:137px;background:#fff;border:1px solid #e6e6e6;border-radius:5px;box-sizing:border-box"></div><div class="t" style="left:245.40px;transform-origin:left center;top:187.82px;font-size:9.8px;line-height:12px;color:#454545;font-weight:normal;;transform:scaleX(1.0049);">Demographics</div><svg style="position:absolute;left:490px;top:191.6px;" width="7" height="3" viewBox="0 0 7 3"><rect x="0" y="0.4" width="1.7" height="1.7" fill="#555"/><rect x="2.3" y="0.4" width="1.7" height="1.7" fill="#555"/><rect x="4.6" y="0.4" width="1.7" height="1.7" fill="#555"/></svg><div style="position:absolute;left:0;top:0;width:800px;height:315px;overflow:hidden"><div class="t" style="right:485.80px;transform-origin:right center;top:205.38px;font-size:9.9px;line-height:12px;color:#a4a4a4;font-weight:normal;;transform:scaleX(0.9629);">Display Name</div><div class="t" style="left:324.40px;transform-origin:left center;top:205.38px;font-size:9.9px;line-height:12px;color:#111;font-weight:bold;;transform:scaleX(1.0122);">SUYAMA, Michael (Mr.)</div><div class="t" style="right:485.80px;transform-origin:right center;top:221.18px;font-size:9.9px;line-height:12px;color:#a4a4a4;font-weight:normal;;transform:scaleX(0.9933);">Address</div><div class="t" style="left:324.40px;transform-origin:left center;top:221.18px;font-size:9.9px;line-height:12px;color:#262626;font-weight:normal;;transform:scaleX(0.9743);">Coventry House</div><div class="t" style="left:340.20px;transform-origin:left center;top:232.28px;font-size:9.9px;line-height:12px;color:#262626;font-weight:normal;;transform:scaleX(0.9808);">Miner Rd.</div><div class="t" style="left:324.40px;transform-origin:left center;top:242.88px;font-size:9.9px;line-height:12px;color:#262626;font-weight:normal;;transform:scaleX(0.9788);">London , EC2 7JR</div><div class="t" style="left:324.40px;transform-origin:left center;top:253.58px;font-size:9.9px;line-height:12px;color:#262626;font-weight:normal;;transform:scaleX(0.8740);">UK</div><div class="t" style="right:485.80px;transform-origin:right center;top:266.88px;font-size:9.9px;line-height:12px;color:#a4a4a4;font-weight:normal;;transform:scaleX(1.0652);">Mobile</div><div class="t" style="left:324.40px;transform-origin:left center;top:266.88px;font-size:9.9px;line-height:12px;color:#262626;font-weight:normal;;transform:scaleX(1.0039);">(71) 555-7773</div><div class="t" style="left:396.30px;transform-origin:left center;top:266.88px;font-size:9.9px;line-height:12px;color:#3f87da;font-weight:normal;;transform:scaleX(0.9806);">SMS</div><div class="t" style="right:485.80px;transform-origin:right center;top:282.88px;font-size:9.9px;line-height:12px;color:#a4a4a4;font-weight:normal;;transform:scaleX(1.0116);">Email</div><div class="t" style="left:324.40px;transform-origin:left center;top:282.88px;font-size:9.9px;line-height:12px;color:#262626;font-weight:normal;;transform:scaleX(0.9781);">suyama@dot.com</div><div class="t" style="right:485.80px;transform-origin:right center;top:303.18px;font-size:9.9px;line-height:12px;color:#a4a4a4;font-weight:normal;;transform:scaleX(1.0030);">Allergies</div><div class="t" style="left:324.40px;transform-origin:left center;top:303.18px;font-size:9.9px;line-height:12px;color:#f0303c;font-weight:normal;;transform:scaleX(0.9802);">Penicilline allergy</div><div class="t" style="left:408.30px;transform-origin:left center;top:303.18px;font-size:9.9px;line-height:12px;color:#3f87da;font-weight:normal;;transform:scaleX(1.0348);">Add</div></div><div style="position:absolute;left:491.7px;top:205.2px;width:10.6px;height:107.6px;background:#efefef"></div><div style="position:absolute;left:491.7px;top:217px;width:10.6px;height:80.3px;background:#c9c9c9"></div><svg style="position:absolute;left:492px;top:207.5px;" width="10" height="8" viewBox="0 0 10 8"><path d="M2.7 5.3 L5 3 L7.3 5.3" fill="none" stroke="#333" stroke-width="1.1"/></svg><svg style="position:absolute;left:492px;top:303px;" width="10" height="8" viewBox="0 0 10 8"><path d="M2.7 3 L5 5.3 L7.3 3" fill="none" stroke="#333" stroke-width="1.1"/></svg><div class="t" style="left:523.60px;transform-origin:left center;top:187.82px;font-size:9.8px;line-height:12px;color:#454545;font-weight:normal;;transform:scaleX(1.0151);">Notes</div><div class="t" style="left:245.80px;transform-origin:left center;top:332.82px;font-size:9.8px;line-height:12px;color:#454545;font-weight:normal;;transform:scaleX(0.9967);">Consultations</div><svg style="position:absolute;left:244px;top:356.5px;" width="9" height="11" viewBox="0 0 9 11"><rect x="0.3" y="1.2" width="8.4" height="9.6" rx="0.9" fill="#e9852a"/><rect x="1.6" y="2.6" width="5.8" height="7" fill="#c6cdf0"/><rect x="2.6" y="0.3" width="3.8" height="2" rx="0.5" fill="#9a9a9a"/></svg><div class="t" style="left:257.80px;transform-origin:left center;top:356.64px;font-size:8.3px;line-height:12px;color:#2e7bd7;font-weight:normal;;transform:scaleX(0.8821);">Meningioma - evaluated for headache and an intracranial...</div><div class="t" style="left:453.60px;transform-origin:left center;top:356.64px;font-size:8.3px;line-height:12px;color:#333;font-weight:normal;;transform:scaleX(0.8824);">27-Feb-2025</div><div style="position:absolute;left:241.7px;top:370px;width:258px;height:1px;background:#efefef"></div><div class="t" style="left:439.80px;transform-origin:left center;top:441.84px;font-size:7.7px;line-height:12px;color:#6a6a6a;font-weight:normal;text-decoration:underline;text-decoration-color:#b0b0b0;text-underline-offset:1px;transform:scaleX(0.9387);">Add Consultation</div><div class="t" style="left:524.00px;transform-origin:left center;top:333.02px;font-size:9.8px;line-height:12px;color:#454545;font-weight:normal;;transform:scaleX(0.9983);">Appointments &amp; Treatment Plans</div><svg style="position:absolute;left:768px;top:336.4px;" width="7" height="3" viewBox="0 0 7 3"><rect x="0" y="0.4" width="1.7" height="1.7" fill="#555"/><rect x="2.3" y="0.4" width="1.7" height="1.7" fill="#555"/><rect x="4.6" y="0.4" width="1.7" height="1.7" fill="#555"/></svg><div class="t" style="left:571.40px;transform-origin:left center;top:441.84px;font-size:7.7px;line-height:12px;color:#6a6a6a;font-weight:normal;text-decoration:underline;text-decoration-color:#b0b0b0;text-underline-offset:1px;transform:scaleX(0.9536);">Schedule Consultation</div><div class="t" style="left:655.20px;transform-origin:left center;top:441.84px;font-size:7.7px;line-height:12px;color:#6a6a6a;font-weight:normal;text-decoration:underline;text-decoration-color:#b0b0b0;text-underline-offset:1px;transform:scaleX(0.9654);">Schedule Resource</div><div class="t" style="left:730.60px;transform-origin:left center;top:441.84px;font-size:7.7px;line-height:12px;color:#6a6a6a;font-weight:normal;text-decoration:underline;text-decoration-color:#b0b0b0;text-underline-offset:1px;transform:scaleX(0.9811);">Add Checkin</div>
</body></html>
